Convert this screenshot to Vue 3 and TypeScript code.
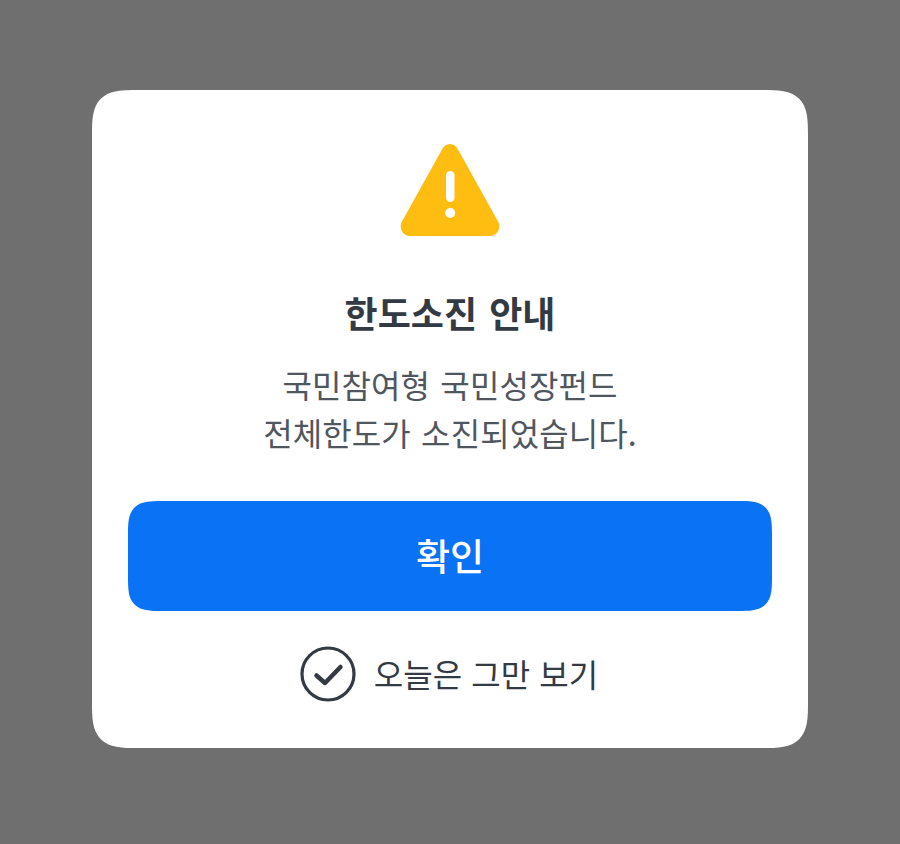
<script setup lang="ts">
const title = '한도소진 안내';
const lines = ['국민참여형 국민성장펀드', '전체한도가 소진되었습니다.'];
</script>

<template>
  <div class="overlay">
    <div class="dialog">
      <svg class="warn-icon" width="100" height="94" viewBox="0 0 100 94" aria-hidden="true">
        <path
          d="M50 0c3.600 0 6.500 2.200 8.300 6l40 72c3 6 -1 14 -8.300 14h-80c-7.300 0 -11.300 -8 -8.300 -14l40 -72c1.800 -3.800 4.700 -6 8.300 -6z"
          fill="#ffbc11"
        />
        <rect x="46" y="27" width="8.500" height="31" rx="4.250" fill="#fff" />
        <circle cx="50.200" cy="69" r="5" fill="#fff" />
      </svg>
      <h2 class="title">{{ title }}</h2>
      <p class="message">
        <span v-for="line in lines" :key="line" class="line">{{ line }}</span>
      </p>
      <button class="confirm" type="button">확인</button>
      <label class="dismiss">
        <svg width="56" height="56" viewBox="0 0 56 56" aria-hidden="true">
          <circle cx="28" cy="28" r="26" fill="none" stroke="#343a43" stroke-width="3.200" />
          <path
            d="M16.500 29.500l8.500 7.500 15.500 -16"
            fill="none"
            stroke="#343a43"
            stroke-width="4.500"
            stroke-linecap="round"
            stroke-linejoin="round"
          />
        </svg>
        <span class="dismiss-label">오늘은 그만 보기</span>
      </label>
    </div>
  </div>
</template>

<style>
html,
body {
  margin: 0;
  background: #6f6f6f;
}
</style>

<style scoped>
.overlay {
  height: 844px;
  box-sizing: border-box;
  padding-top: 90px;
  display: flex;
  justify-content: center;
  align-items: flex-start;
  background: #6f6f6f;
  font-family: "Noto Sans CJK KR", "Noto Sans", sans-serif;
}

.dialog {
  width: 716px;
  height: 658px;
  box-sizing: border-box;
  padding: 54px 36px 0;
  display: flex;
  flex-direction: column;
  align-items: center;
  background: #fff;
  border-radius: 46px;
  corner-shape: superellipse(1.7);
}

.warn-icon {
  display: block;
}

.title {
  margin: 49px 0 0;
  font-size: 36px;
  line-height: 50px;
  font-weight: 700;
  color: #343a43;
  word-spacing: 4px;
}

.message {
  margin: 23px 0 0;
  text-align: center;
  font-size: 32px;
  line-height: 48px;
  color: #50565e;
  word-spacing: 3px;
  letter-spacing: 0.1px;
}

.line {
  display: block;
}

.confirm {
  width: 100%;
  height: 110px;
  margin-top: 45px;
  padding: 0 0 3px;
  border: 0;
  border-radius: 34px;
  corner-shape: superellipse(1.7);
  background: #0a72f5;
  color: #fff;
  font-family: inherit;
  font-size: 37px;
  font-weight: 500;
}

.dismiss {
  margin-top: 35px;
  padding-right: 2px;
  display: flex;
  align-items: center;
  gap: 18px;
  font-size: 32px;
  color: #343a43;
  word-spacing: 2px;
}

.dismiss-label {
  margin-bottom: 3px;
}
</style>
